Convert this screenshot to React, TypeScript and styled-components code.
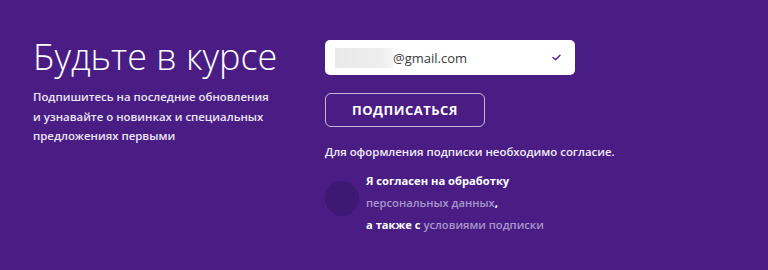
import styled, { createGlobalStyle } from 'styled-components';

const GlobalStyle = createGlobalStyle`
  html, body {
    margin: 0;
    padding: 0;
    background: #4a1d85;
  }

  body {
    font-family: 'Open Sans', 'Noto Sans', sans-serif;
  }
`;

export default function App() {
  return (
    <>
      <GlobalStyle />
      <Subscribe>
        <Intro>
          <Title>Будьте в курсе</Title>
          <Lead>
            Подпишитесь на последние обновления
            <br />
            и узнавайте о новинках и специальных
            <br />
            предложениях первыми
          </Lead>
        </Intro>

        <Form>
          <EmailField>
            <Masked />
            <EmailText>@gmail.com</EmailText>
            <Check viewBox="0 0 10 8">
              <path d="M1 4 L4 6.5 L9 1.5" />
            </Check>
          </EmailField>

          <SubmitButton type="button">Подписаться</SubmitButton>

          <Notice>Для оформления подписки необходимо согласие.</Notice>

          <Consent>
            <Radio />
            <ConsentText>
              <p>Я согласен на обработку</p>
              <p>
                <a href="#">персональных данных</a>,
              </p>
              <p>
                а также с <a href="#">условиями подписки</a>
              </p>
            </ConsentText>
          </Consent>
        </Form>
      </Subscribe>
    </>
  );
}

const Subscribe = styled.section`
  display: flex;
  height: 270px;
  box-sizing: border-box;
  padding: 40px 0 0 33px;
  background: #4a1d85;
  color: #fff;
`;

const Intro = styled.div`
  width: 292px;
  flex-shrink: 0;
`;

const Title = styled.h1`
  margin: 0;
  font-family: 'Open Sans', sans-serif;
  font-weight: 300;
  font-size: 36px;
  line-height: 34px;
`;

const Lead = styled.p`
  margin: 13px 0 0;
  font-size: 11.4px;
  line-height: 19.5px;
  font-weight: 600;
  color: #ece6f3;
`;

const Form = styled.div`
  display: flex;
  flex-direction: column;
  align-items: flex-start;
`;

const EmailField = styled.div`
  display: flex;
  align-items: center;
  width: 250px;
  height: 35px;
  box-sizing: border-box;
  padding: 0 14px 0 10px;
  background: #fff;
  border-radius: 5px;
`;

const Masked = styled.span`
  width: 58px;
  height: 20px;
  background: linear-gradient(90deg, #e9e9e9, #eeeeee 80%, #f6f6f6);
  filter: blur(0.6px);
`;

const EmailText = styled.span`
  flex: 1;
  font-size: 13px;
  color: #3a3a3a;
`;

const Check = styled.svg`
  width: 9px;
  height: 7px;
  fill: none;
  stroke: #5b2a96;
  stroke-width: 1.8;
  stroke-linecap: round;
  stroke-linejoin: round;
`;

const SubmitButton = styled.button`
  margin-top: 18px;
  width: 160px;
  height: 34px;
  background: transparent;
  border: 1.5px solid #c7b5df;
  border-radius: 6px;
  color: #fff;
  font-family: 'Open Sans', sans-serif;
  font-weight: 700;
  font-size: 13px;
  letter-spacing: 0.5px;
  text-transform: uppercase;
  cursor: pointer;
`;

const Notice = styled.p`
  margin: 17px 0 0;
  font-size: 11.4px;
  font-weight: 600;
  color: #f1ecf7;
`;

const Consent = styled.div`
  display: flex;
  align-items: flex-start;
  gap: 7px;
  margin-top: 11px;
`;

const Radio = styled.span`
  flex-shrink: 0;
  width: 34px;
  height: 35px;
  border-radius: 50%;
  background: #3f1874;
  margin-top: 11px;
`;

const ConsentText = styled.div`
  font-size: 11.2px;
  font-weight: 700;
  line-height: 22px;
  color: #fff;

  p {
    margin: 0;
  }

  a {
    color: #a996cc;
    font-weight: 600;
    text-decoration: none;
  }
`;
